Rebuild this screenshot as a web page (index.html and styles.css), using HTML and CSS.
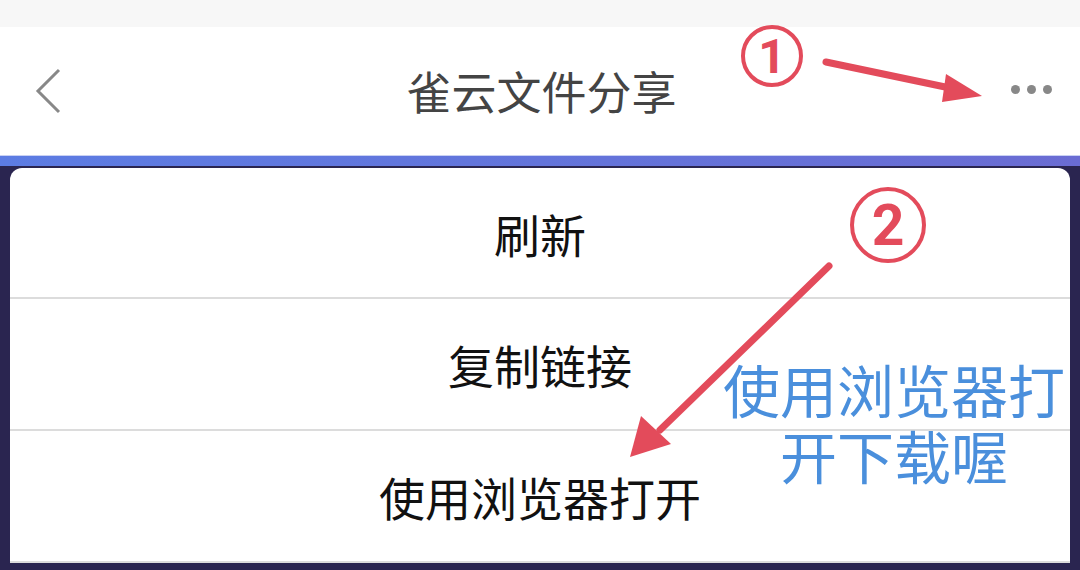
FILE: index.html
```html
<!DOCTYPE html>
<html lang="zh-CN">
  <head>
    <meta charset="UTF-8" />
    <meta name="viewport" content="width=device-width, initial-scale=1.0" />
    <title>雀云文件分享</title>
    <link rel="stylesheet" href="styles.css">
  </head>
  <body>
    <div class="status-bar"></div>

    <header class="nav-bar">
      <button class="nav-back" aria-label="返回">
        <svg width="30" height="48" viewBox="0 0 30 48">
          <polyline points="24,4 3,25 24,46" fill="none" stroke="#888" stroke-width="3" />
        </svg>
      </button>
      <h1 class="nav-title">雀云文件分享</h1>
      <button class="nav-more" aria-label="更多">
        <span class="dot"></span><span class="dot"></span><span class="dot"></span>
      </button>
    </header>

    <div class="accent-bar"></div>

    <div class="sheet">
      <ul class="menu">
        <li class="menu-item">刷新</li>
        <li class="menu-item">复制链接</li>
        <li class="menu-item">使用浏览器打开</li>
      </ul>
    </div>

    <!-- annotations drawn over the screenshot -->
    <svg class="marks" width="1080" height="570" viewBox="0 0 1080 570">
      <g fill="none" stroke="#e34b5b" stroke-width="4">
        <circle cx="772" cy="56" r="29" />
        <circle cx="888" cy="225" r="36" />
      </g>
      <g fill="#e34b5b" font-family="Roboto, 'Noto Sans', sans-serif" font-weight="700" text-anchor="middle">
        <text x="772" y="73" font-size="48">1</text>
        <text x="888" y="245" font-size="57">2</text>
      </g>
      <g stroke="#e34b5b" stroke-width="7" stroke-linecap="round">
        <line x1="826" y1="62" x2="950" y2="88" />
        <line x1="829" y1="266" x2="660" y2="430" />
      </g>
      <g fill="#e34b5b">
        <polygon points="982,96 946,74 942,102" />
        <polygon points="630,457 641,416 671,444" />
      </g>
    </svg>

    <p class="note">
      <span class="note-line">使用浏览器打</span>
      <span class="note-line">开下载喔</span>
    </p>
  </body>
</html>
```

FILE: styles.css
```css
body {
  margin: 0;
  width: 1080px;
  height: 570px;
  overflow: hidden;
  position: relative;
  background-color: #2a2550;
  font-family: "Noto Sans CJK SC", "Noto Sans", sans-serif;
}
.status-bar {
  height: 27px;
  background-color: #f7f7f7;
}
.nav-bar {
  height: 128px;
  background-color: #ffffff;
  display: flex;
  align-items: center;
  justify-content: space-between;
  padding: 0 28px 0 35px;
}
.nav-bar button {
  background: none;
  border: none;
  padding: 0;
  display: flex;
  align-items: center;
}
.nav-back {
  width: 60px;
  margin-top: -2px;
}
.nav-title {
  margin: 0;
  font-size: 45px;
  font-weight: 400;
  color: #444;
  margin-top: -2px;
  margin-left: -4px;
}
.nav-more {
  width: 60px;
  justify-content: flex-end;
  gap: 7px;
  margin-top: -4px;
}
.dot {
  width: 9px;
  height: 9px;
  border-radius: 50%;
  background-color: #888;
}
.accent-bar {
  height: 10px;
  border-top: 1px solid #c9d1f3;
  background: linear-gradient(to right, #5c7ce3, #6a6cd3);
}
.sheet {
  padding: 2px 10px 0;
}
.menu {
  list-style-type: none;
  margin: 0;
  padding: 0;
  background-color: #ffffff;
  border-radius: 12px 12px 0 0;
}
.menu-item {
  height: 132px;
  display: flex;
  align-items: center;
  justify-content: center;
  border-bottom: 2px solid #dcdcdc;
  font-size: 46px;
  color: #111;
  box-sizing: border-box;
}
.menu-item:first-child {
  height: 131px;
}
.marks {
  position: absolute;
  left: 0;
  top: 0;
  pointer-events: none;
}
.note {
  position: absolute;
  left: 714px;
  top: 360px;
  width: 360px;
  margin: 0;
  display: flex;
  flex-direction: column;
  align-items: center;
  gap: 9px;
  font-size: 57px;
  line-height: 57px;
  color: #4a8fdc;
}
.note-line {
  display: block;
}
```
